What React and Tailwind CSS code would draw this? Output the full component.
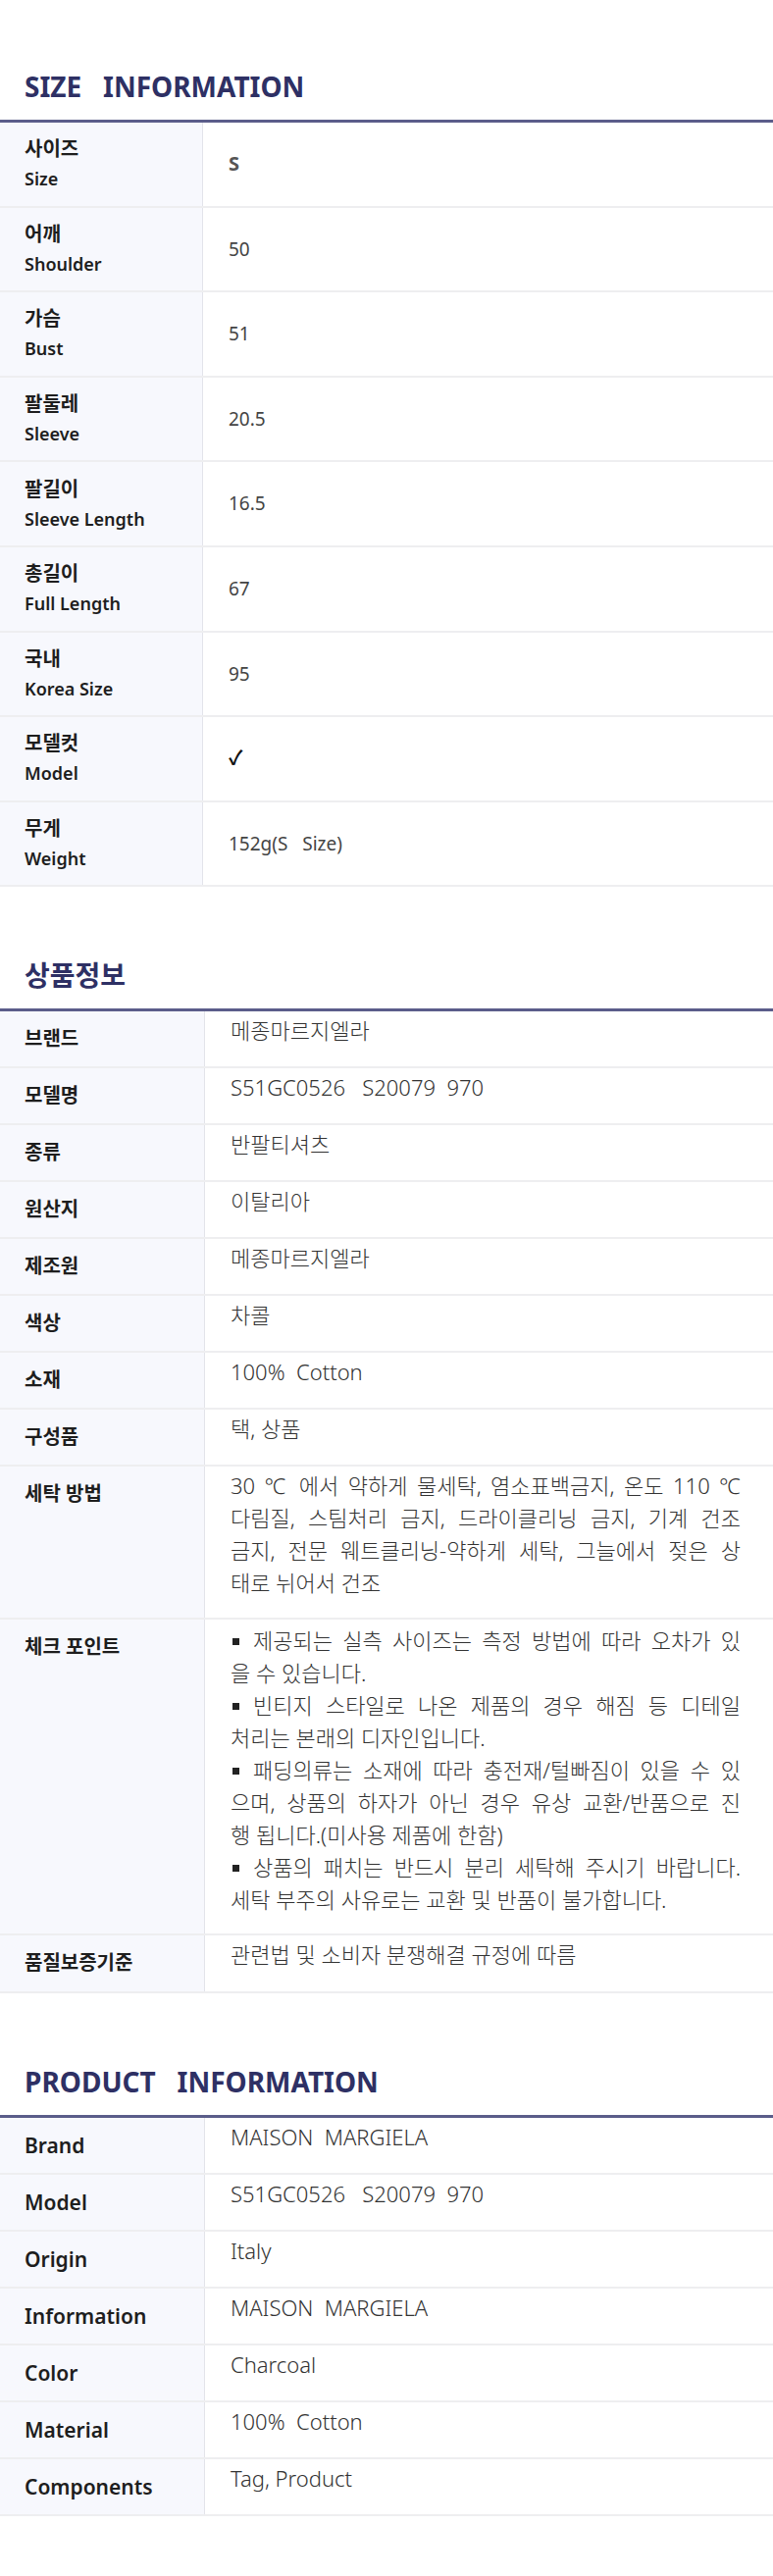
import React from 'react';

const sizeRows = [
  { ko: '사이즈', en: 'Size', value: 'S', bold: true },
  { ko: '어깨', en: 'Shoulder', value: '50' },
  { ko: '가슴', en: 'Bust', value: '51' },
  { ko: '팔둘레', en: 'Sleeve', value: '20.5' },
  { ko: '팔길이', en: 'Sleeve Length', value: '16.5' },
  { ko: '총길이', en: 'Full Length', value: '67' },
  { ko: '국내', en: 'Korea Size', value: '95' },
  { ko: '모델컷', en: 'Model', value: '✓', check: true },
  { ko: '무게', en: 'Weight', value: '152g(S   Size)' },
];

const infoRows = [
  ['브랜드', '메종마르지엘라'],
  ['모델명', 'S51GC0526   S20079  970'],
  ['종류', '반팔티셔츠'],
  ['원산지', '이탈리아'],
  ['제조원', '메종마르지엘라'],
  ['색상', '차콜'],
  ['소재', '100%  Cotton'],
  ['구성품', '택, 상품'],
];

const washLines = [
  '30 ℃ 에서 약하게 물세탁, 염소표백금지, 온도 110 ℃',
  '다림질, 스팀처리 금지, 드라이클리닝 금지, 기계 건조',
  '금지, 전문 웨트클리닝-약하게 세탁, 그늘에서 젖은 상',
];

// [text, bullet, justify]
const checkLines = [
  ['제공되는 실측 사이즈는 측정 방법에 따라 오차가 있', true, true],
  ['을 수 있습니다.', false, false],
  ['빈티지 스타일로 나온 제품의 경우 해짐 등 디테일', true, true],
  ['처리는 본래의 디자인입니다.', false, false],
  ['패딩의류는 소재에 따라 충전재/털빠짐이 있을 수 있', true, true],
  ['으며, 상품의 하자가 아닌 경우 유상 교환/반품으로 진', false, true],
  ['행 됩니다.(미사용 제품에 한함)', false, false],
  ['상품의 패치는 반드시 분리 세탁해 주시기 바랍니다.', true, true],
  ['세탁 부주의 사유로는 교환 및 반품이 불가합니다.', false, false],
];

const productRows = [
  ['Brand', 'MAISON  MARGIELA'],
  ['Model', 'S51GC0526   S20079  970'],
  ['Origin', 'Italy'],
  ['Information', 'MAISON  MARGIELA'],
  ['Color', 'Charcoal'],
  ['Material', '100%  Cotton'],
  ['Components', 'Tag, Product'],
];

function Title({ children, first }) {
  return (
    <h2 className={`${first ? 'mt-[68px]' : 'mt-[70px]'} mb-[14px] px-[25px] h-[40px] text-[28px] leading-[40px] font-bold text-[#2e3064] whitespace-pre`}>
      {children}
    </h2>
  );
}

function InfoRow({ label, children, h, labelClass = '' }) {
  return (
    <div className="grid grid-cols-[209px_1fr] border-b-2 border-[#eeeef0]" style={{ height: h }}>
      <div className={`bg-[#f7f8fd] border-r border-[#e3e4ea] px-[25px] pt-[12px] text-[20px] leading-[32px] font-bold text-[#1e1e1e] ${labelClass}`}>
        {label}
      </div>
      <div className="pl-[26px] pr-[33px] pt-[3px] text-[22px] leading-[33px] font-light text-[#333] whitespace-pre">
        {children}
      </div>
    </div>
  );
}

export default function App() {
  return (
    <div className="w-[788px] min-h-[2626px] bg-white pb-[67px] font-['Noto_Sans','Noto_Sans_CJK_KR',sans-serif] text-[#222]">
      <Title first>{'SIZE   INFORMATION'}</Title>
      <div className="border-t-[3px] border-[#5b5d8a]">
        {sizeRows.map((r) => (
          <div key={r.en} className="grid grid-cols-[207px_1fr] h-[86.6px] border-b-2 border-[#eeeef0]">
            <div className="bg-[#f7f8fd] border-r border-[#e3e4ea] px-[25px] flex flex-col justify-center">
              <div className="text-[20px] leading-[30px] font-bold text-[#1e1e1e]">{r.ko}</div>
              <div className="text-[18px] leading-[30px] font-semibold text-[#1e1e1e]">{r.en}</div>
            </div>
            <div className={`pl-[26px] flex items-center whitespace-pre ${r.bold ? 'text-[20px] font-bold text-[#555]' : r.check ? 'text-[20px] font-bold text-[#111]' : 'text-[19px] text-[#444]'}`}>
              {r.value}
            </div>
          </div>
        ))}
      </div>

      <Title>상품정보</Title>
      <div className="border-t-[3px] border-[#5b5d8a]">
        {infoRows.map(([k, v]) => (
          <InfoRow key={k} label={k} h={58}>{v}</InfoRow>
        ))}
        <InfoRow label="세탁 방법" h={156}>
          {washLines.map((l) => (
            <div key={l} className="text-justify [text-align-last:justify] whitespace-normal">{l}</div>
          ))}
          <div>태로 뉘어서 건조</div>
        </InfoRow>
        <InfoRow label="체크 포인트" h={322}>
          <div className="pt-[2px]">
            {checkLines.map(([t, bullet, just]) => (
              <div key={t} className={`whitespace-normal ${just ? 'text-justify [text-align-last:justify]' : ''}`}>
                {bullet && <span className="inline-block w-[7px] h-[7px] bg-[#222] align-middle mr-[14px] ml-[2px] mb-[3px]"></span>}
                {t}
              </div>
            ))}
          </div>
        </InfoRow>
        <InfoRow label="품질보증기준" h={59}>관련법 및 소비자 분쟁해결 규정에 따름</InfoRow>
      </div>

      <Title>{'PRODUCT   INFORMATION'}</Title>
      <div className="border-t-[3px] border-[#5b5d8a]">
        {productRows.map(([k, v]) => (
          <InfoRow key={k} label={k} h={58} labelClass="!font-semibold !text-[21px]">{v}</InfoRow>
        ))}
      </div>
    </div>
  );
}
